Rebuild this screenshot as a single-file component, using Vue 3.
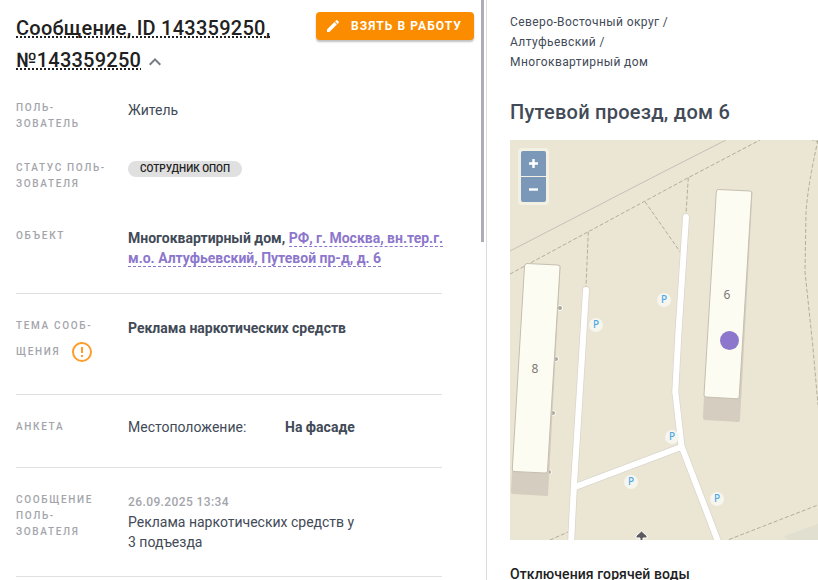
<script setup>
import { ref } from 'vue'

const expanded = ref(true)
const zoom = ref(0)

const message = {
  id: '143359250',
  user: 'Житель',
  status: 'Сотрудник ОПОП',
  objectType: 'Многоквартирный дом',
  address: 'РФ, г. Москва, вн.тер.г. м.о. Алтуфьевский, Путевой пр-д, д. 6',
  topic: 'Реклама наркотических средств',
  date: '26.09.2025 13:34',
  text: 'Реклама наркотических средств у 3 подъезда'
}

const survey = [{ name: 'Местоположение:', value: 'На фасаде' }]

const crumbs = ['Северо-Восточный округ /', 'Алтуфьевский /', 'Многоквартирный дом']

const parkings = [
  { x: 86, y: 185 },
  { x: 154, y: 160 },
  { x: 121, y: 342 },
  { x: 162, y: 297 },
  { x: 207, y: 359 }
]

const entrances = [
  { x: 50, y: 168 },
  { x: 46, y: 219 },
  { x: 43, y: 273 },
  { x: 39, y: 332 }
]

const roads = [
  'M76 150 L72.7 205 L64 344 L61 404',
  'M65 347 L171 307',
  'M176 77 L168.3 195 L165.3 251.7 L171.5 306 L209 404'
]

const paths = [
  'M0 134 L78.3 91.7 L178.3 37.7 L250 0',
  'M78.3 91.7 L76 147',
  'M135 61.7 L171 113',
  'M178.3 37.7 L176 74',
  'M300 -1 L308 2',
  'M308 0 Q298 44 296 72 L295 132 L302.7 205 L308 265',
  'M40 400 L58 392',
  'M219 399.5 L308 365'
]
</script>

<template>
  <div class="layout">
    <main class="message">
      <div class="message-scroll">
        <header class="message-header">
          <h1 class="title">
            <span class="title-text">Сообщение, ID {{ message.id }}, №{{ message.id }}</span>
            <button class="btn-toggle" type="button" aria-label="Свернуть" @click="expanded = !expanded">
              <svg width="24" height="24" viewBox="0 0 24 24" fill="currentColor">
                <path d="M7.41 15.41L12 10.83l4.59 4.58L18 14l-6-6-6 6z" />
              </svg>
            </button>
          </h1>
          <button class="btn-work" type="button">
            <svg width="16" height="16" viewBox="0 0 24 24" fill="currentColor">
              <path d="M20.71 7.04c.39-.39.39-1.04 0-1.41l-2.34-2.34c-.37-.39-1.02-.39-1.41 0l-1.84 1.83 3.75 3.75M3 17.25V21h3.75L17.81 9.93l-3.75-3.75L3 17.25z" />
            </svg>
            <span>Взять в работу</span>
          </button>
        </header>

        <dl v-show="expanded" class="fields">
          <div class="field plain">
            <dt>Поль&shy;зователь</dt>
            <dd>{{ message.user }}</dd>
          </div>
          <div class="field plain status">
            <dt>Статус поль&shy;зователя</dt>
            <dd><span class="chip">{{ message.status }}</span></dd>
          </div>
          <div class="field object">
            <dt>Объект</dt>
            <dd class="strong">{{ message.objectType }}, <a href="#" class="link">{{ message.address }}</a></dd>
          </div>
          <div class="field">
            <dt>
              Тема сооб&shy;щения
              <button class="btn-alert" type="button" aria-label="Подробнее о теме">
                <svg width="24" height="24" viewBox="0 0 24 24" fill="currentColor">
                  <path d="M11 15h2v2h-2v-2m0-8h2v6h-2V7m1-5C6.47 2 2 6.5 2 12a10 10 0 0 0 10 10 10 10 0 0 0 10-10A10 10 0 0 0 12 2m0 18a8 8 0 0 1-8-8 8 8 0 0 1 8-8 8 8 0 0 1 8 8 8 8 0 0 1-8 8z" />
                </svg>
              </button>
            </dt>
            <dd class="strong">{{ message.topic }}</dd>
          </div>
          <div class="field">
            <dt>Анкета</dt>
            <dd>
              <div v-for="s in survey" :key="s.name" class="survey-item">
                <span>{{ s.name }}</span>
                <span class="strong">{{ s.value }}</span>
              </div>
            </dd>
          </div>
          <div class="field">
            <dt>Сообщение поль&shy;зователя</dt>
            <dd>
              <div class="date">{{ message.date }}</div>
              <div class="text">{{ message.text }}</div>
            </dd>
          </div>
        </dl>
      </div>
      <div class="scroll-thumb"></div>
    </main>

    <aside class="place">
      <nav class="crumbs">
        <a v-for="c in crumbs" :key="c" href="#">{{ c }}</a>
      </nav>
      <h2 class="place-title">Путевой проезд, дом 6</h2>

      <div class="map">
        <svg class="map-canvas" viewBox="0 0 308 400" preserveAspectRatio="xMinYMin slice">
          <path d="M274 396 L308 384 V400 H277 Z" fill="#e1dfcf" />
          <path d="M0 111 L155 31 L216 0" stroke="#c3c0b9" fill="none" />
          <path v-for="p in paths" :key="p" :d="p" class="footpath" />
          <path v-for="r in roads" :key="'e' + r" :d="r" class="road-edge" />
          <path v-for="r in roads" :key="r" :d="r" class="road" />

          <circle v-for="e in entrances" :key="e.y" :cx="e.x" :cy="e.y" r="2.5" class="entrance" />

          <path d="M15 124 L50.5 126 L38 355 Q38 356 37 356 L3 354 Q1 354 1 352 L2 331 Z" fill="#d5cdbf" />
          <path d="M17 123.5 L48 125 Q50 125 50 127 L37.5 331 Q37 333 35 333 L4 331.5 Q2 331 2.3 329 L14.5 126 Q15 123.5 17 123.5 Z" class="building" />
          <path d="M207 50 L242.5 52 L230 280 Q230 282 228 282 L195 280 Q193 280 193 278 L194 256 Z" fill="#d5cdbf" />
          <path d="M208.5 49.5 L240 51 Q242 51 241.7 53 L229.2 257 Q229 259 227 258.8 L196 257 Q194 257 194 255 L206.3 52 Q206.5 49.5 208.5 49.5 Z" class="building" />
          <text x="25" y="233" class="house">8</text>
          <text x="217" y="159" class="house">6</text>

          <g v-for="p in parkings" :key="p.x">
            <circle :cx="p.x" :cy="p.y" r="7" fill="#f6f5ee" />
            <text :x="p.x" :y="p.y + 3" class="parking">P</text>
          </g>

          <path d="M131.5 391 L137 396 V398 H133 V401 H130 V398 H126 V396 Z" fill="#5d5a5f" stroke="#fff" />
          <circle cx="219.5" cy="200.5" r="9.5" fill="#8c77cc" />
        </svg>
        <div class="zoom">
          <button type="button" aria-label="Приблизить" @click="zoom++">
            <svg width="11" height="11" viewBox="0 0 11 11"><path d="M1 5.5h9M5.5 1v9" stroke="#fff" stroke-width="2.4" /></svg>
          </button>
          <button type="button" aria-label="Отдалить" @click="zoom--">
            <svg width="11" height="11" viewBox="0 0 11 11"><path d="M1 5.5h9" stroke="#fff" stroke-width="2.4" /></svg>
          </button>
        </div>
      </div>

      <h3 class="outages">Отключения горячей воды</h3>
    </aside>
  </div>
</template>

<style>
body {
  margin: 0;
  background: #fff;
}
</style>

<style scoped>
.layout {
  display: flex;
  height: 100vh;
  overflow: hidden;
  font-family: Roboto, sans-serif;
  font-size: 14px;
  line-height: 20px;
  color: #424a57;
}
button {
  font: inherit;
  border: none;
  padding: 0;
  background: none;
  cursor: pointer;
}

.message {
  position: relative;
  flex: 486 1 0;
  min-width: 0;
  border-right: 1px solid #dcdcdf;
}
.message-scroll {
  height: 100%;
  box-sizing: border-box;
  padding: 12px 12px 0 16px;
  overflow: hidden;
}
.scroll-thumb {
  position: absolute;
  top: 0;
  right: 2px;
  width: 3px;
  height: 242px;
  background: #aeadb5;
}

.message-header {
  display: flex;
  justify-content: space-between;
  align-items: flex-start;
  gap: 16px;
}
.title {
  margin: 0;
  font-size: 20px;
  line-height: 32px;
  font-weight: 500;
  letter-spacing: 0.0125em;
  color: #212121;
}
.title-text {
  text-decoration: underline dotted 2px;
  text-decoration-skip-ink: none;
}
.btn-toggle {
  height: 24px;
  margin-left: 2px;
  color: #767a85;
  vertical-align: middle;
}
.btn-toggle svg {
  display: block;
}
.btn-work {
  display: flex;
  align-items: center;
  gap: 10px;
  flex-shrink: 0;
  height: 28px;
  padding: 0 12px 0 9px;
  border-radius: 4px;
  background: #fb8c00;
  color: #fff;
  font-size: 12px;
  font-weight: 700;
  letter-spacing: 0.09em;
  text-transform: uppercase;
  box-shadow: 0 2px 2px rgba(0, 0, 0, 0.25);
}

.fields {
  margin: 0 32px 0 0;
}
.field {
  display: flex;
  gap: 20px;
  padding: 24px 0;
  border-bottom: 1px solid #e0e0e0;
}
.field.plain {
  border-bottom: none;
  padding-bottom: 4px;
}
.field.status {
  padding-bottom: 12px;
}
.field.object {
  padding-bottom: 25px;
}
.object dd {
  margin-right: -12px;
}
dt {
  flex: 0 0 92px;
  font-size: 10px;
  line-height: 16px;
  font-weight: 500;
  letter-spacing: 0.1666em;
  text-transform: uppercase;
  color: #a3a5ab;
}
dd {
  flex: 1;
  min-width: 0;
  margin: 0;
}
.strong {
  font-weight: 700;
}
.link {
  color: #8c77cc;
  text-decoration: none;
  border-bottom: 1px dashed #8c77cc;
}
.chip {
  display: inline-block;
  margin-top: 1px;
  padding: 0 12px;
  border-radius: 8px;
  background: #e0e0e0;
  color: #212121;
  font-size: 10px;
  line-height: 16px;
  font-weight: 500;
  text-transform: uppercase;
  vertical-align: top;
}
.btn-alert {
  display: inline-flex;
  align-items: center;
  justify-content: center;
  width: 36px;
  height: 36px;
  color: #ff9d2b;
  vertical-align: middle;
}
.survey-item {
  display: grid;
  grid-template-columns: 1fr 1fr;
  line-height: 16px;
  margin-bottom: 8px;
}
.date {
  font-size: 12px;
  font-weight: 500;
  letter-spacing: 0.0333em;
  color: #a3a5ab;
}
.text {
  max-width: 232px;
}

.place {
  flex: 308 1 0;
  min-width: 0;
  padding: 12px 0 0 23px;
}
.crumbs {
  display: flex;
  flex-direction: column;
  font-size: 12px;
  letter-spacing: 0.0333em;
}
.crumbs a {
  color: inherit;
  text-decoration: none;
}
.place-title {
  margin: 24px 0 12px;
  font-size: 20px;
  line-height: 32px;
  font-weight: 500;
  letter-spacing: 0.0125em;
}
.map {
  position: relative;
  height: 400px;
  background: #ebe6d3;
  overflow: hidden;
}
.map-canvas {
  display: block;
  width: 100%;
  height: 100%;
}
.footpath {
  fill: none;
  stroke: #b3ae9c;
  stroke-dasharray: 4 2;
}
.road-edge {
  fill: none;
  stroke: #d9d6cc;
  stroke-width: 7.5;
  stroke-linecap: round;
}
.road {
  fill: none;
  stroke: #fff;
  stroke-width: 6;
  stroke-linecap: round;
}
.building {
  fill: #fcfcf2;
  stroke: #c6bfb0;
}
.entrance {
  fill: #aaa698;
  stroke: #fff;
}
.house {
  fill: #7d7a76;
  font-family: "Noto Sans", sans-serif;
  font-size: 12px;
  text-anchor: middle;
}
.parking {
  fill: #4fa8e6;
  font-family: "Noto Sans", sans-serif;
  font-size: 10px;
  font-weight: 500;
  text-anchor: middle;
}
.zoom {
  position: absolute;
  top: 8px;
  left: 8px;
  display: flex;
  flex-direction: column;
  gap: 1px;
  padding: 3px;
  border-radius: 4px;
  background: rgba(255, 255, 255, 0.4);
}
.zoom button {
  display: flex;
  align-items: center;
  justify-content: center;
  width: 25px;
  height: 25px;
  background: #7b98b8;
}
.zoom button:first-child {
  border-radius: 2px 2px 0 0;
}
.zoom button:last-child {
  border-radius: 0 0 2px 2px;
}
.outages {
  margin: 24px 0 0;
  font-size: 14px;
  line-height: 20px;
  font-weight: 500;
  letter-spacing: 0.0071em;
  color: #212121;
}
</style>
